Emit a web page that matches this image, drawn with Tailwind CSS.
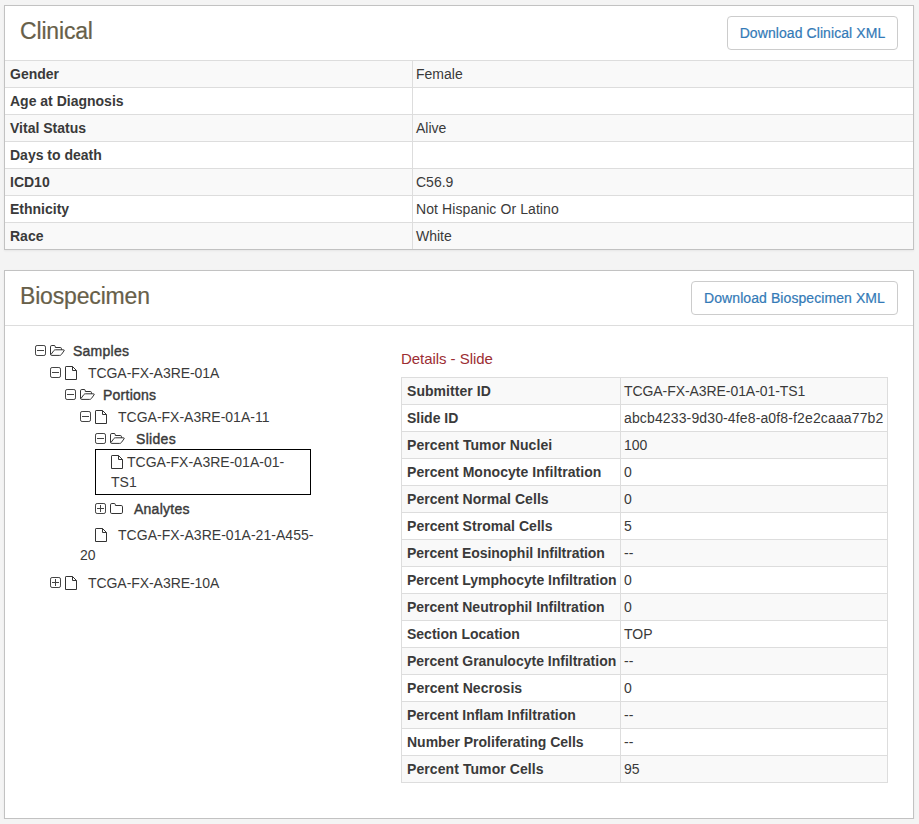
<!DOCTYPE html>
<html lang="en">
<head>
<meta charset="utf-8">
<title>Clinical and Biospecimen</title>
<script src="https://cdn.jsdelivr.net/npm/@tailwindcss/browser@4"></script>
</head>
<body class="bg-[#f4f4f4] font-['Liberation_Sans',Arial,sans-serif] text-[14px] leading-5 text-[#3a3a3a]">
<svg class="hidden">
  <symbol id="minus" viewBox="0 0 12 12" fill="none" stroke="#444"><rect x=".5" y=".5" width="10" height="10" rx="1.6"/><path d="M2 5.5h7"/></symbol>
  <symbol id="plus" viewBox="0 0 12 12" fill="none" stroke="#444"><rect x=".5" y=".5" width="10" height="10" rx="1.6"/><path d="M2 5.5h7M5.5 2v7"/></symbol>
  <symbol id="open" viewBox="0 0 16 12" fill="none" stroke="#333"><path d="M.5 9.2V1.8Q.5.5 1.8.5h2.3q1.2 0 1.2 1.2v.8h4.9q1.3 0 1.3 1.2v1.1M.9 9.6l3-4.1q.6-.7 1.5-.7h7.9q1.5 0 .7 1.1l-2.6 3.6q-.7.9-1.7.9H1.8Q.5 10.4.5 9.2"/></symbol>
  <symbol id="closed" viewBox="0 0 14 12" fill="none" stroke="#333"><path d="M.5 1.8Q.5.5 1.8.5h2.4q1.2 0 1.2 1.2v.8h5.8q1.3 0 1.3 1.3v5.4q0 1.3-1.3 1.3H1.8Q.5 10.5.5 9.2z"/></symbol>
  <symbol id="file" viewBox="0 0 12 14" fill="none" stroke="#333"><path d="M1.1.5h6.4l4 4v9H.5V1.1Q.5.5 1.1.5zM7.5.5v4h4"/></symbol>
</svg>
<main class="px-1 pt-[5px] pr-[5px]">
  <section class="border border-[#c2c2c2] bg-white shadow-[0_1px_2px_rgba(0,0,0,0.06)]">
    <header class="flex h-[54px] items-start justify-between pl-[15px] pr-[15px] pt-[10px]">
      <h2 class="text-[23px] leading-[31px] tracking-[-0.17px] text-[#676049] [-webkit-text-stroke:0.2px_#676049]"><span>Clinical</span></h2>
      <button class="h-[34px] w-[171px] whitespace-nowrap rounded border border-[#ccc] tracking-[0.08px] text-[#337ab7] [-webkit-text-stroke:0.2px_#337ab7]"><span>Download Clinical XML</span></button>
    </header>
    <dl>
      <div class="flex h-[27px] border-t border-[#ddd] bg-[#f9f9f9]"><dt class="w-[408px] border-r border-[#ddd] pl-[5px] pt-[3px] font-bold">Gender</dt><dd class="pl-[3px] pt-[3px]">Female</dd></div>
      <div class="flex h-[27px] border-t border-[#ddd]"><dt class="w-[408px] border-r border-[#ddd] pl-[5px] pt-[3px] font-bold">Age at Diagnosis</dt><dd></dd></div>
      <div class="flex h-[27px] border-t border-[#ddd] bg-[#f9f9f9]"><dt class="w-[408px] border-r border-[#ddd] pl-[5px] pt-[3px] font-bold">Vital Status</dt><dd class="pl-[3px] pt-[3px]">Alive</dd></div>
      <div class="flex h-[27px] border-t border-[#ddd]"><dt class="w-[408px] border-r border-[#ddd] pl-[5px] pt-[3px] font-bold">Days to death</dt><dd></dd></div>
      <div class="flex h-[27px] border-t border-[#ddd] bg-[#f9f9f9]"><dt class="w-[408px] border-r border-[#ddd] pl-[5px] pt-[3px] font-bold">ICD10</dt><dd class="pl-[3px] pt-[3px]">C56.9</dd></div>
      <div class="flex h-[27px] border-t border-[#ddd]"><dt class="w-[408px] border-r border-[#ddd] pl-[5px] pt-[3px] font-bold">Ethnicity</dt><dd class="pl-[3px] pt-[3px] tracking-[0.09px]">Not Hispanic Or Latino</dd></div>
      <div class="flex h-[27px] border-t border-[#ddd] bg-[#f9f9f9]"><dt class="w-[408px] border-r border-[#ddd] pl-[5px] pt-[3px] font-bold">Race</dt><dd class="pl-[3px] pt-[3px]">White</dd></div>
    </dl>
  </section>

  <section class="mt-5 h-[549px] border border-[#c2c2c2] bg-white shadow-[0_1px_2px_rgba(0,0,0,0.06)]">
    <header class="flex h-[55px] items-start justify-between border-b border-[#ddd] pl-[15px] pr-[15px] pt-[10px]">
      <h2 class="text-[23px] leading-[31px] tracking-[-0.17px] text-[#676049] [-webkit-text-stroke:0.2px_#676049]"><span>Biospecimen</span></h2>
      <button class="h-[34px] w-[207px] whitespace-nowrap rounded border border-[#ccc] tracking-[0.08px] text-[#337ab7] [-webkit-text-stroke:0.2px_#337ab7]"><span>Download Biospecimen XML</span></button>
    </header>
    <div class="flex">
      <nav class="w-[396px] pt-[14px] pl-[30px]">
        <div class="flex h-[22px] items-center"><svg class="h-3 w-3"><use href="#minus"/></svg><svg class="ml-[3px] h-3 w-4"><use href="#open"/></svg><span class="ml-[7px] tracking-[0.25px] [-webkit-text-stroke:0.4px_#3a3a3a]">Samples</span></div>
        <div class="flex h-[22px] items-center pl-[15px]"><svg class="h-3 w-3"><use href="#minus"/></svg><svg class="ml-[3px] h-[14px] w-3"><use href="#file"/></svg><span class="ml-[11px] tracking-[-0.06px]">TCGA-FX-A3RE-01A</span></div>
        <div class="flex h-[22px] items-center pl-[30px]"><svg class="h-3 w-3"><use href="#minus"/></svg><svg class="ml-[3px] h-3 w-4"><use href="#open"/></svg><span class="ml-[7px] tracking-[0.25px] [-webkit-text-stroke:0.4px_#3a3a3a]">Portions</span></div>
        <div class="flex h-[22px] items-center pl-[45px]"><svg class="h-3 w-3"><use href="#minus"/></svg><svg class="ml-[3px] h-[14px] w-3"><use href="#file"/></svg><span class="ml-[11px]">TCGA-FX-A3RE-01A-11</span></div>
        <div class="flex h-[21px] items-center pl-[60px] pt-px"><svg class="h-3 w-3"><use href="#minus"/></svg><svg class="ml-[3px] h-3 w-4"><use href="#open"/></svg><span class="ml-[10px] tracking-[0.3px] [-webkit-text-stroke:0.4px_#3a3a3a]">Slides</span></div>
        <div class="ml-[60px] h-[46px] w-[216px] border border-black pl-[15px] pt-[2px]"><svg class="mr-1 inline h-[14px] w-3 align-[-2px]"><use href="#file"/></svg><span>TCGA-FX-A3RE-01A-01-</span><br><span>TS1</span></div>
        <div class="mt-[3px] flex h-[22px] items-center pl-[60px]"><svg class="h-3 w-3"><use href="#plus"/></svg><svg class="ml-[3px] h-3 w-[14px]"><use href="#closed"/></svg><span class="ml-[10px] tracking-[0.25px] [-webkit-text-stroke:0.4px_#3a3a3a]">Analytes</span></div>
        <div class="mt-[5px] pl-[45px]"><svg class="ml-[15px] mr-[11px] inline h-[14px] w-3 align-[-2px]"><use href="#file"/></svg><span class="tracking-[0.04px]">TCGA-FX-A3RE-01A-21-A455-</span><br><span>20</span></div>
        <div class="mt-[7px] flex h-[22px] items-center pl-[15px]"><svg class="h-3 w-3"><use href="#plus"/></svg><svg class="ml-[3px] h-[14px] w-3"><use href="#file"/></svg><span class="ml-[11px] tracking-[-0.06px]">TCGA-FX-A3RE-10A</span></div>
      </nav>
      <div class="w-[487px] pt-[23px]">
        <h3 class="mb-[8px] text-[15px] leading-5 tracking-[-0.05px] text-[#9c2e33]">Details - Slide</h3>
        <dl class="border-x border-b border-[#ddd]">
          <div class="flex h-[27px] border-t border-[#ddd] bg-[#f9f9f9]"><dt class="w-[219px] whitespace-nowrap border-r border-[#ddd] pl-[5px] pt-[3px] font-bold tracking-[0.05px]">Submitter ID</dt><dd class="whitespace-nowrap pl-[3px] pt-[3px] tracking-[-0.07px]">TCGA-FX-A3RE-01A-01-TS1</dd></div>
          <div class="flex h-[27px] border-t border-[#ddd]"><dt class="w-[219px] whitespace-nowrap border-r border-[#ddd] pl-[5px] pt-[3px] font-bold">Slide ID</dt><dd class="whitespace-nowrap pl-[3px] pt-[3px] tracking-[0.135px]">abcb4233-9d30-4fe8-a0f8-f2e2caaa77b2</dd></div>
          <div class="flex h-[27px] border-t border-[#ddd] bg-[#f9f9f9]"><dt class="w-[219px] whitespace-nowrap border-r border-[#ddd] pl-[5px] pt-[3px] font-bold tracking-[0.08px]">Percent Tumor Nuclei</dt><dd class="pl-[3px] pt-[3px]">100</dd></div>
          <div class="flex h-[27px] border-t border-[#ddd]"><dt class="w-[219px] whitespace-nowrap border-r border-[#ddd] pl-[5px] pt-[3px] font-bold tracking-[0.05px]">Percent Monocyte Infiltration</dt><dd class="pl-[3px] pt-[3px]">0</dd></div>
          <div class="flex h-[27px] border-t border-[#ddd] bg-[#f9f9f9]"><dt class="w-[219px] whitespace-nowrap border-r border-[#ddd] pl-[5px] pt-[3px] font-bold tracking-[0.04px]">Percent Normal Cells</dt><dd class="pl-[3px] pt-[3px]">0</dd></div>
          <div class="flex h-[27px] border-t border-[#ddd]"><dt class="w-[219px] whitespace-nowrap border-r border-[#ddd] pl-[5px] pt-[3px] font-bold tracking-[0.04px]">Percent Stromal Cells</dt><dd class="pl-[3px] pt-[3px]">5</dd></div>
          <div class="flex h-[27px] border-t border-[#ddd] bg-[#f9f9f9]"><dt class="w-[219px] whitespace-nowrap border-r border-[#ddd] pl-[5px] pt-[3px] font-bold tracking-[-0.04px]">Percent Eosinophil Infiltration</dt><dd class="pl-[3px] pt-[3px]">--</dd></div>
          <div class="flex h-[27px] border-t border-[#ddd]"><dt class="w-[219px] whitespace-nowrap border-r border-[#ddd] pl-[5px] pt-[3px] font-bold">Percent Lymphocyte Infiltration</dt><dd class="pl-[3px] pt-[3px]">0</dd></div>
          <div class="flex h-[27px] border-t border-[#ddd] bg-[#f9f9f9]"><dt class="w-[219px] whitespace-nowrap border-r border-[#ddd] pl-[5px] pt-[3px] font-bold">Percent Neutrophil Infiltration</dt><dd class="pl-[3px] pt-[3px]">0</dd></div>
          <div class="flex h-[27px] border-t border-[#ddd]"><dt class="w-[219px] whitespace-nowrap border-r border-[#ddd] pl-[5px] pt-[3px] font-bold">Section Location</dt><dd class="pl-[3px] pt-[3px]">TOP</dd></div>
          <div class="flex h-[27px] border-t border-[#ddd] bg-[#f9f9f9]"><dt class="w-[219px] whitespace-nowrap border-r border-[#ddd] pl-[5px] pt-[3px] font-bold">Percent Granulocyte Infiltration</dt><dd class="pl-[3px] pt-[3px]">--</dd></div>
          <div class="flex h-[27px] border-t border-[#ddd]"><dt class="w-[219px] whitespace-nowrap border-r border-[#ddd] pl-[5px] pt-[3px] font-bold tracking-[0.05px]">Percent Necrosis</dt><dd class="pl-[3px] pt-[3px]">0</dd></div>
          <div class="flex h-[27px] border-t border-[#ddd] bg-[#f9f9f9]"><dt class="w-[219px] whitespace-nowrap border-r border-[#ddd] pl-[5px] pt-[3px] font-bold">Percent Inflam Infiltration</dt><dd class="pl-[3px] pt-[3px]">--</dd></div>
          <div class="flex h-[27px] border-t border-[#ddd]"><dt class="w-[219px] whitespace-nowrap border-r border-[#ddd] pl-[5px] pt-[3px] font-bold">Number Proliferating Cells</dt><dd class="pl-[3px] pt-[3px]">--</dd></div>
          <div class="flex h-[27px] border-t border-[#ddd] bg-[#f9f9f9]"><dt class="w-[219px] whitespace-nowrap border-r border-[#ddd] pl-[5px] pt-[3px] font-bold tracking-[0.08px]">Percent Tumor Cells</dt><dd class="pl-[3px] pt-[3px]">95</dd></div>
        </dl>
      </div>
    </div>
  </section>
</main>
</body>
</html>
